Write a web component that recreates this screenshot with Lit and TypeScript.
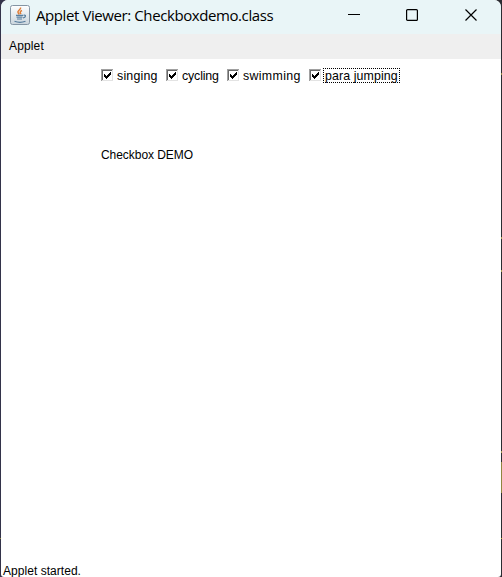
import { LitElement, html, css, svg } from "lit";
import { customElement, property } from "lit/decorators.js";

@customElement("check-item")
class CheckItem extends LitElement {
  @property() label = "";
  @property({ type: Number }) space = 0;
  @property({ type: Boolean, reflect: true }) focused = false;
  static styles = css`
    :host { display: flex; height: 15px; }
    .box { width: 12px; height: 12px; margin-top: 1px; flex: none; display: block; }
    .label { box-sizing: border-box; font-size: 12.4px; height: 15px; line-height: 17px; margin-left: 2px; padding: 0 2px; white-space: nowrap; }
    :host([focused]) .label { border: 1px dotted #000; line-height: 15px; padding: 0 1px; width: 77px; }
  `;
  render() {
    return html`<svg class="box" viewBox="0 0 12 12" shape-rendering="crispEdges">
        <rect width="12" height="12" fill="#e3e3e3" />
        <path d="M0 0H12V1H1V12H0Z" fill="#a0a0a0" />
        <path d="M1 1H11V2H2V11H1Z" fill="#696969" />
        <rect x="2" y="2" width="9" height="9" fill="#fff" />
        <path d="M3 5h1v1h1v1h1v-1h1v-1h1v-1h1v-1h1v3h-1v1h-1v1h-1v1h-1v1h-1v-1h-1v-1h-1Z" fill="#000" />
      </svg><span class="label" style="letter-spacing:${this.space}px">${this.label}</span>`;
  }
}

@customElement("app-root")
class AppRoot extends LitElement {
  static styles = css`
    :host { display: block; width: 502px; height: 577px; overflow: hidden;
      background:
        linear-gradient(#8f8540, #8f8540) 501px 73px / 1px 2px no-repeat,
        linear-gradient(#a69b55, #a69b55) 501px 237px / 1px 2px no-repeat,
        linear-gradient(#a69b55, #a69b55) 501px 270px / 1px 2px no-repeat,
        linear-gradient(#a69b55, #a69b55) 501px 451px / 1px 2px no-repeat,
        linear-gradient(#8f8540, #8f8540) 501px 462px / 1px 31px no-repeat,
        linear-gradient(#b0a030, #b0a030) 501px 538px / 1px 1px no-repeat,
        linear-gradient(#8f8540, #8f8540) 0 538px / 1px 1px no-repeat,
        linear-gradient(90deg, #33334a 50%, #2b2c32 50%);
      font: 12px "Liberation Sans", Arial, sans-serif; color: #000; }
    .window { box-sizing: border-box; width: 500px; height: 577px; margin-left: 1px; background: #fff;
      border-radius: 7px 7px 3px 3px; overflow: hidden; display: flex; flex-direction: column; }
    .title { height: 34px; flex: none; background: #e9f5f7; display: flex; align-items: center; }
    .java { width: 20px; height: 20px; margin: 0 0 4px 9px; flex: none; }
    .name { font: 15px/20px "Open Sans", "Noto Sans", sans-serif; width: 300px; margin: 0 0 5px 6px;
      white-space: nowrap; letter-spacing: -0.41px; }
    .controls { display: flex; margin: 0 0 4px 12px; }
    .controls svg { width: 12px; height: 12px; display: block; }
    .maximize { margin: 0 47px 0 46px; }
    .menu { height: 25px; flex: none; background: #efefef; line-height: 24px; padding-left: 8px; letter-spacing: 0.15px; }
    .checks { display: flex; height: 15px; margin: 9px 0 0 100px; }
    .cell { flex: none; }
    .c1 { width: 65px; } .c2 { width: 61px; } .c3 { width: 82px; }
    .demo { margin: 64px 0 0 100px; line-height: 16px; letter-spacing: -0.05px; }
    .status { margin-top: auto; height: 14px; line-height: 16px; padding-left: 2px; letter-spacing: 0.04px; }
  `;
  icon() {
    return svg`<svg class="java" viewBox="0 0 20 20">
      <defs><linearGradient id="g" x2="0" y2="1"><stop stop-color="#fff" /><stop offset="1" stop-color="#c9d4dc" /></linearGradient></defs>
      <rect x=".5" y=".5" width="19" height="19" rx="2" fill="url(#g)" stroke="#8495a4" />
      <path d="M10.500 2.500c1 2-3.500 3-2.500 5 .3.800 1 1.300 1.200 2M12 5.500c-2.500 1-2 2 -1 3.500" fill="none" stroke="#e07c35" stroke-width="1.500" />
      <path d="M6 10.300h7M6.500 12.200h6M7 14h5M4.500 16.200c3 1.200 8 1.200 11 0M13.500 10.300c3-.8 2.500 2-.5 2.700" fill="none" stroke="#587e9e" stroke-width="1.200" />
    </svg>`;
  }
  render() {
    return html`<div class="window">
      <div class="title">${this.icon()}<span class="name">Applet Viewer: Checkboxdemo.class</span>
        <div class="controls">
          <svg viewBox="0 0 12 12"><path d="M0 5.500H12" stroke="#000" /></svg>
          <svg class="maximize" viewBox="0 0 12 12"><rect x=".6" y=".6" width="10.800" height="10.800" rx="1" fill="none" stroke="#000" stroke-width="1.200" /></svg>
          <svg viewBox="0 0 12 12"><path d="M.5 .5L11.500 11.500M11.500 .5L.5 11.500" stroke="#000" stroke-width="1.200" /></svg>
        </div>
      </div>
      <div class="menu">Applet</div>
      <div class="checks">
        <check-item class="cell c1" label="singing" space="0.2"></check-item>
        <check-item class="cell c2" label="cycling" space="-0.15"></check-item>
        <check-item class="cell c3" label="swimming" space="0.32"></check-item>
        <check-item class="cell" label="para jumping" space="0.1" focused></check-item>
      </div>
      <div class="demo">Checkbox DEMO</div>
      <div class="status">Applet started.</div>
    </div>`;
  }
}
